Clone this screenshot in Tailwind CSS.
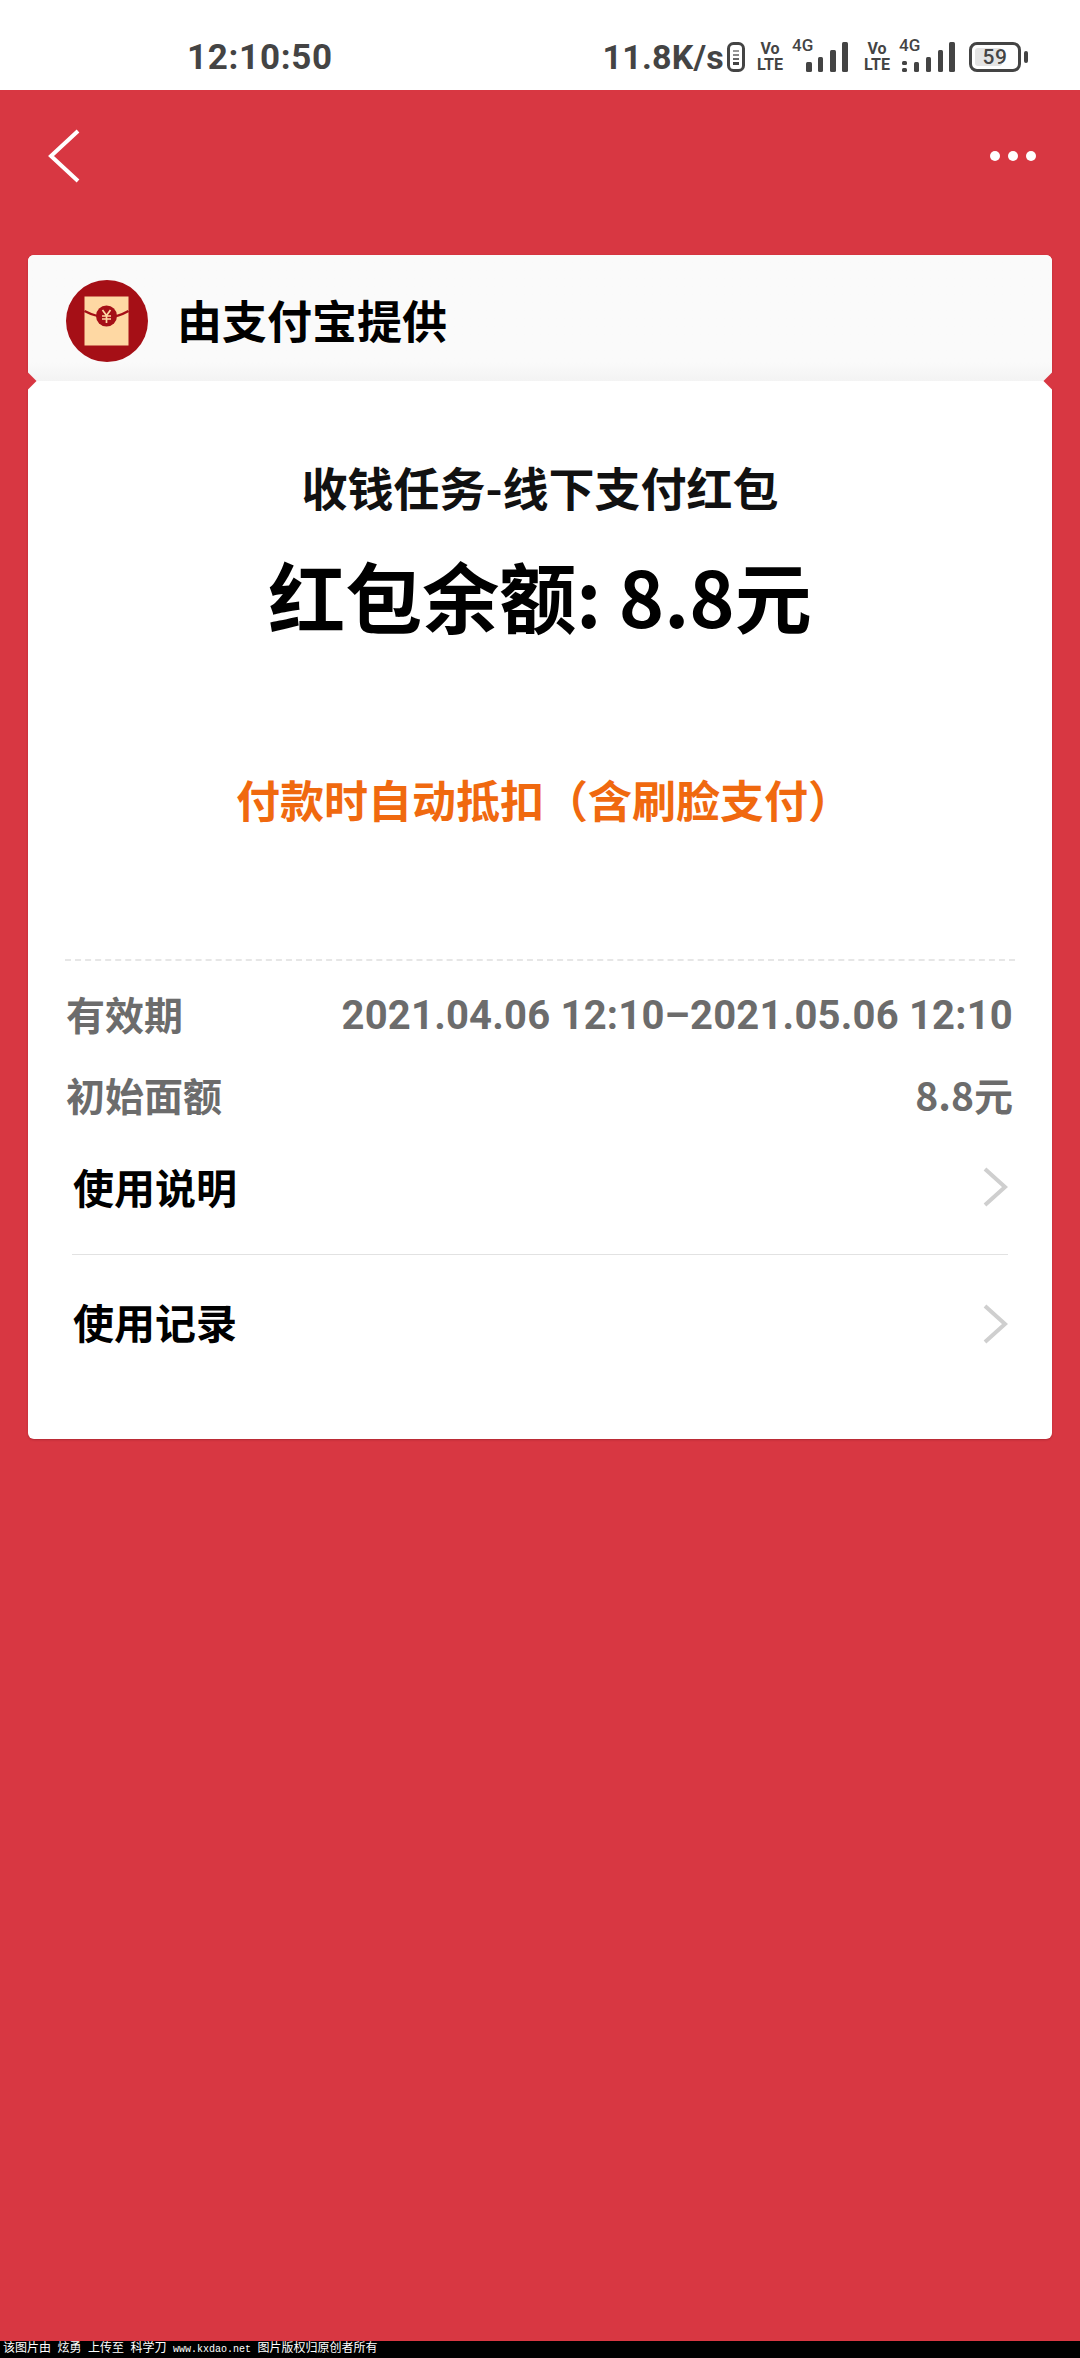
<!DOCTYPE html>
<html lang="zh-CN">
<head>
  <meta charset="UTF-8">
  <meta name="viewport" content="width=device-width, initial-scale=1.0">
  <title>红包详情</title>
  <script src="https://cdn.jsdelivr.net/npm/@tailwindcss/browser@4"></script>
</head>
<body class="bg-[#d83742] font-['Noto_Sans_CJK_SC','Noto_Sans',sans-serif]">
  <div class="w-[1080px] h-[2358px] flex flex-col overflow-hidden">
    <!-- Status bar -->
    <div class="h-[90px] shrink-0 bg-white flex items-center pt-[24px] text-[#444]">
      <span class="ml-[187px] text-[35px] leading-none font-bold font-['Roboto'] tracking-[0.7px]">12:10:50</span>
      <div class="ml-auto mr-[52px] flex items-center">
        <span class="text-[34px] leading-none font-bold font-['Roboto'] tracking-[0.2px]">11.8K/s</span>
        <svg class="ml-[3px]" width="18" height="30" viewBox="0 0 18 30"><rect x="1.500" y="1.500" width="15" height="27" rx="5" fill="none" stroke="#444" stroke-width="3"/><rect x="6" y="8" width="6" height="2" fill="#999"/><rect x="6" y="12" width="6" height="2" fill="#888"/><rect x="6" y="16" width="6" height="2" fill="#666"/><rect x="6" y="20" width="6" height="3" fill="#444"/></svg>
        <div class="ml-[10px] w-[30px] flex flex-col items-center text-[16px] leading-[16px] font-bold font-['Roboto']"><span>Vo</span><span>LTE</span></div>
        <div class="ml-[7px] relative w-[57px] h-[32px]">
          <span class="absolute left-0 top-[-4px] text-[17px] leading-none font-medium font-['Roboto']">4G</span>
          <svg class="absolute left-0 top-0" width="57" height="32" viewBox="0 0 57 32"><rect x="14" y="21" width="6" height="10" rx="1.500" fill="#444"/><rect x="26" y="16" width="5" height="15" rx="1.500" fill="#444"/><rect x="38" y="9" width="6" height="22" rx="1.500" fill="#444"/><rect x="50" y="1" width="6" height="30" rx="1.500" fill="#444"/></svg>
        </div>
        <div class="ml-[13px] w-[30px] flex flex-col items-center text-[16px] leading-[16px] font-bold font-['Roboto']"><span>Vo</span><span>LTE</span></div>
        <div class="ml-[7px] relative w-[57px] h-[32px]">
          <span class="absolute left-0 top-[-4px] text-[17px] leading-none font-medium font-['Roboto']">4G</span>
          <svg class="absolute left-0 top-0" width="57" height="32" viewBox="0 0 57 32"><rect x="3" y="20" width="5" height="4" rx="1.500" fill="#444"/><rect x="3" y="27" width="5" height="4" rx="1.500" fill="#444"/><rect x="15" y="21" width="5" height="10" rx="1.500" fill="#444"/><rect x="27" y="16" width="5" height="15" rx="1.500" fill="#444"/><rect x="39" y="9" width="5" height="22" rx="1.500" fill="#444"/><rect x="50" y="1" width="6" height="30" rx="1.500" fill="#444"/></svg>
        </div>
        <div class="ml-[13px] relative w-[52px] h-[30px] rounded-[8px] border-[3px] border-[#444] flex items-center justify-center overflow-hidden">
          <div class="absolute left-[3px] top-[3px] bottom-[3px] w-[27px] rounded-[3px] bg-[#e4e4e4]"></div>
          <span class="relative text-[21px] leading-none font-medium font-['Roboto'] tracking-[0.5px]">59</span>
        </div>
        <div class="ml-[3px] w-[4px] h-[12px] rounded-[2px] bg-[#444]"></div>
      </div>
    </div>

    <!-- Nav -->
    <div class="h-[165px] shrink-0 px-[48px] pb-[34px] flex items-center justify-between">
      <svg width="32" height="54" viewBox="0 0 32 54"><path d="M30 2 L3 27 L30 52" fill="none" stroke="#fff" stroke-width="4"/></svg>
      <div class="flex gap-[8px] mr-[-4px]">
        <span class="w-[10px] h-[10px] rounded-full bg-white"></span>
        <span class="w-[10px] h-[10px] rounded-full bg-white"></span>
        <span class="w-[10px] h-[10px] rounded-full bg-white"></span>
      </div>
    </div>

    <!-- Card -->
    <div class="mx-[28px] h-[1184px] shrink-0 rounded-[6px] bg-white flex flex-col relative shadow-[0_1px_2px_rgba(120,20,30,0.4)]">
      <div class="h-[126px] shrink-0 rounded-t-[6px] bg-gradient-to-b from-[#fafafa] from-85% to-[#f3f3f3] flex items-center pl-[38px] pt-[5px]">
        <svg width="82" height="82" viewBox="0 0 82 82">
          <circle cx="41" cy="41" r="41" fill="#a50f16"/>
          <rect x="18.500" y="16.500" width="44" height="49" fill="#fed8a3"/>
          <path d="M18.500 31 Q30 37 41 37 Q52 37 62.500 31" fill="none" stroke="#a50f16" stroke-width="2.500"/>
          <circle cx="40.500" cy="36" r="10.500" fill="#a50f16"/>
          <path d="M36.500 30 L40.500 35.500 L44.500 30 M36 36 H45 M36 39 H45 M40.500 35.500 V43" fill="none" stroke="#fed8a3" stroke-width="1.700"/>
        </svg>
        <span class="ml-[29px] mb-[2px] text-[45px] leading-none font-bold text-black">由支付宝提供</span>
      </div>
      <span class="absolute left-[-6px] top-[120px] w-[12px] h-[12px] rotate-45 bg-[#d83742]"></span>
      <span class="absolute right-[-6px] top-[120px] w-[12px] h-[12px] rotate-45 bg-[#d83742]"></span>

      <div class="flex flex-col items-center">
        <p class="mt-[75px] text-[46px] leading-[60px] font-bold text-[#111]">收钱任务-线下支付红包</p>
        <p class="mt-[34px] text-[77px] leading-[90px] font-bold text-black">红包余额: 8.8元</p>
        <p class="mt-[129px] ml-[8px] text-[44px] leading-[60px] font-bold text-[#f0690f]">付款时自动抵扣（含刷脸支付）</p>
      </div>

      <div class="mt-[130px] mx-[37px] border-t-2 border-dashed border-[#e6e6e6]"></div>

      <div class="ml-[38px] mr-[39px] mt-[26px] flex flex-col text-[39px] font-bold text-[#6c6c6c]">
        <div class="h-[52px] flex items-center justify-between">
          <span>有效期</span>
          <span class="pt-[5px] text-[40px] font-['Roboto'] tracking-[0.2px]">2021.04.06 12:10–2021.05.06 12:10</span>
        </div>
        <div class="mt-[29px] h-[52px] flex items-center justify-between">
          <span>初始面额</span>
          <span class="pt-[1px]">8.8元</span>
        </div>
      </div>

      <div class="mx-[44px] mt-[20px] flex flex-col text-[41px] font-bold text-black">
        <div class="h-[115px] flex items-center justify-between pl-[1px] border-b border-[#e2e2e2]">
          <span class="mb-[20px]">使用说明</span>
          <svg class="mb-[20px]" width="26" height="40" viewBox="0 0 26 40"><path d="M3 2 L23 20 L3 38" fill="none" stroke="#cfcfcf" stroke-width="4"/></svg>
        </div>
        <div class="h-[139px] flex items-center justify-between pl-[1px]">
          <span class="mb-[5px]">使用记录</span>
          <svg class="mb-[2px]" width="26" height="40" viewBox="0 0 26 40"><path d="M3 2 L23 20 L3 38" fill="none" stroke="#cfcfcf" stroke-width="4"/></svg>
        </div>
      </div>
    </div>

    <!-- Watermark -->
    <div class="mt-auto h-[17px] bg-black text-white text-[12px] leading-[17px] pl-[3px] whitespace-pre [word-spacing:-0.7px] font-['Liberation_Mono','Noto_Sans_CJK_SC',monospace]">该图片由 炫勇 上传至 科学刀 <span class="text-[10px]">www.kxdao.net</span> 图片版权归原创者所有</div>
  </div>
</body>
</html>
